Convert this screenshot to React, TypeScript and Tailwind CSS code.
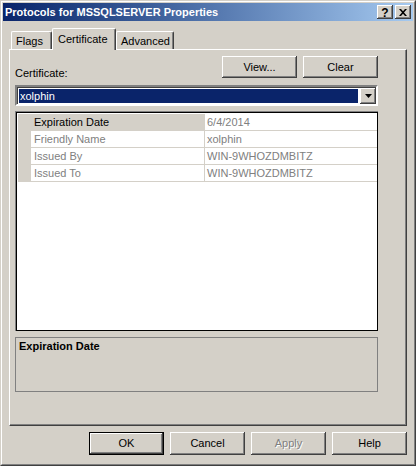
import React from "react";

const bevel =
  "shadow-[inset_-1px_-1px_#404040,inset_1px_1px_#ffffff,inset_-2px_-2px_#808080,inset_2px_2px_#d4d0c8]";

function Btn({
  children,
  isDefault,
  disabled,
  short,
}: {
  children: React.ReactNode;
  isDefault?: boolean;
  disabled?: boolean;
  short?: boolean;
}) {
  return (
    <button
      type="button"
      className={
        "w-[75px] flex items-center justify-center leading-[13px] bg-[#d4d0c8] " +
        (short ? "h-[22px] " : "h-[23px] ") +
        (isDefault ? "border border-black " : "") +
        (disabled ? "text-[#808080] [text-shadow:1px_1px_0_#ffffff] " : "text-black ")
      }
    >
      <span className={"w-full h-full flex items-center justify-center " + bevel}>
        {children}
      </span>
    </button>
  );
}

function TitleBtn({ children }: { children: React.ReactNode }) {
  return (
    <div
      className={
        "w-[16px] h-[14px] bg-[#d4d0c8] flex items-center justify-center text-black " +
        bevel
      }
    >
      {children}
    </div>
  );
}

function Tab({
  label,
  active,
  w,
}: {
  label: string;
  active?: boolean;
  w: string;
}) {
  return (
    <div
      className={
        "bg-[#d4d0c8] border-t border-l border-white border-r border-r-[#404040] rounded-t-[2px] shadow-[inset_-1px_0_#808080] leading-[13px] " +
        w +
        (active ? " h-[22px] -mb-px pt-[4px] pl-[5px]" : " h-[18px] pt-[3px] pl-[4px]")
      }
    >
      {label}
    </div>
  );
}

const rows: { label: string; value: string; selected?: boolean }[] = [
  { label: "Expiration Date", value: "6/4/2014", selected: true },
  { label: "Friendly Name", value: "xolphin" },
  { label: "Issued By", value: "WIN-9WHOZDMBITZ" },
  { label: "Issued To", value: "WIN-9WHOZDMBITZ" },
];

export default function App() {
  return (
    <div className="w-[416px] h-[466px] bg-[#d4d0c8] border border-t-[#d4d0c8] border-l-[#d4d0c8] border-r-[#404040] border-b-[#404040] text-[11px] text-black font-['Liberation_Sans',Arial,sans-serif] select-none">
      <div className="h-full border border-t-white border-l-white border-r-[#808080] border-b-[#808080] p-px flex flex-col">
        {/* title bar */}
        <div className="h-[18px] shrink-0 bg-linear-to-r from-[#0a246a] to-[#a6caf0] flex items-center pl-[2px] pr-[2px]">
          <span className="flex-1 font-bold text-white leading-[13px]">
            Protocols for MSSQLSERVER Properties
          </span>
          <div className="flex gap-[2px]">
            <TitleBtn>
              <span className="font-bold text-[12px] leading-[12px] pt-px">?</span>
            </TitleBtn>
            <TitleBtn>
              <svg width="8" height="7" viewBox="0 0 8 7">
                <path d="M0 0h2l2 2.2L6 0h2L5 3.5 8 7H6L4 4.8 2 7H0l3-3.5z" fill="#000" />
              </svg>
            </TitleBtn>
          </div>
        </div>

        <div className="flex-1 flex flex-col px-[6px] pt-[7px]">
          {/* tabs */}
          <div className="relative z-10 h-[21px] flex items-end pl-[2px]">
            <Tab label="Flags" w="w-[41px]" />
            <Tab label="Certificate" w="w-[64px]" active />
            <Tab label="Advanced" w="w-[58px]" />
          </div>

          {/* tab page */}
          <div className="h-[377px] border-t border-l border-white border-r border-b border-r-[#404040] border-b-[#404040] shadow-[inset_-1px_-1px_#808080] pt-[6px] pl-[5px]">
            <div className="w-[363px] flex flex-col">
              <div className="flex items-start justify-between">
                <span className="mt-[11px] leading-[13px]">Certificate:</span>
                <div className="flex gap-[6px]">
                  <Btn short>View...</Btn>
                  <Btn short>Clear</Btn>
                </div>
              </div>

              {/* combobox */}
              <div className="mt-[5px] h-[21px] border-2 border-t-[#808080] border-l-[#808080] border-r-white border-b-white">
                <div className="h-full shadow-[inset_1px_1px_#404040] bg-white flex pl-px pt-px">
                  <div className="flex-1 m-px mr-[2px] bg-[#0a246a] text-white flex items-center pl-px leading-[13px]">
                    xolphin
                  </div>
                  <div
                    className={
                      "w-[16px] h-[16px] bg-[#d4d0c8] flex items-center justify-center " +
                      bevel
                    }
                  >
                    <svg width="7" height="4" viewBox="0 0 7 4">
                      <path d="M0 0h7L3.5 4z" fill="#000" />
                    </svg>
                  </div>
                </div>
              </div>

              {/* property grid */}
              <div className="mt-[5px] h-[220px] border-t border-l border-[#808080]">
                <div className="h-full border border-black bg-white pt-px pl-px flex flex-col">
                  {rows.map((r) => (
                    <div key={r.label} className="flex h-[17px]">
                      <div className="w-[13px] bg-[#d4d0c8]" />
                      <div
                        className={
                          "w-[174px] border-b border-r border-[#d4d0c8] pl-[3px] leading-[16px] " +
                          (r.selected ? "bg-[#d4d0c8] text-black" : "bg-white text-[#808080]")
                        }
                      >
                        {r.label}
                      </div>
                      <div className="flex-1 border-b border-[#d4d0c8] pl-[2px] leading-[16px] text-[#808080]">
                        {r.value}
                      </div>
                    </div>
                  ))}
                </div>
              </div>

              {/* description */}
              <div className="mt-[6px] h-[55px] border border-[#808080] pt-[2px] pl-[3px] font-bold leading-[13px]">
                Expiration Date
              </div>
            </div>
          </div>

          {/* dialog buttons */}
          <div className="mt-[6px] flex justify-end gap-[6px]">
            <Btn isDefault>OK</Btn>
            <Btn>Cancel</Btn>
            <Btn disabled>Apply</Btn>
            <Btn>Help</Btn>
          </div>
        </div>
      </div>
    </div>
  );
}
